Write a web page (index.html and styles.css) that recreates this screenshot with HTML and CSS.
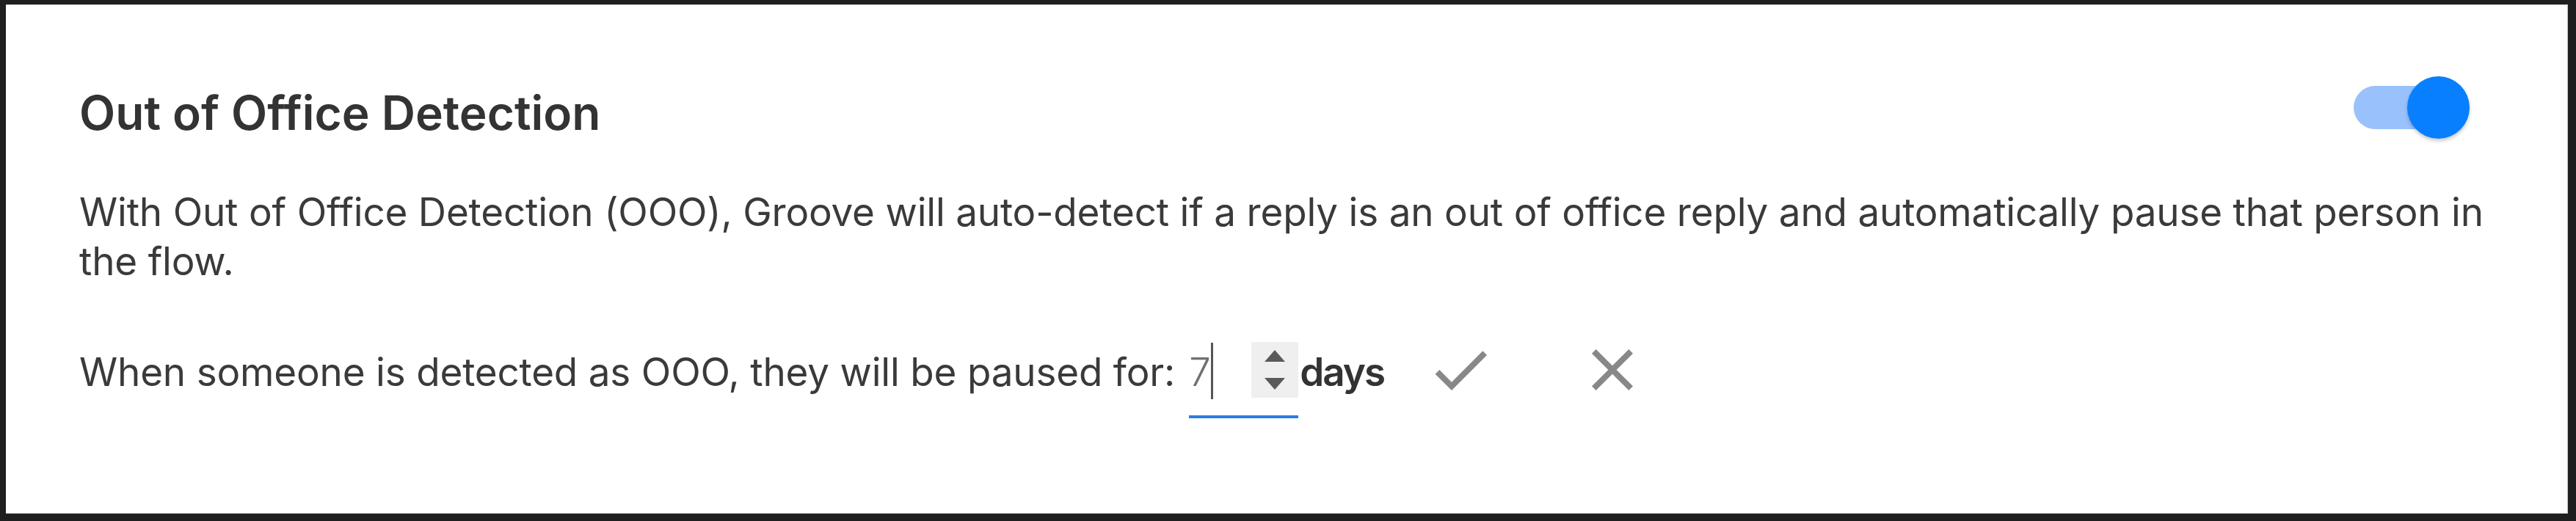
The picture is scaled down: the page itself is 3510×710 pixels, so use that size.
FILE: index.html
```html
<!DOCTYPE html>
<html lang="en">
<head>
<meta charset="utf-8">
<title>Out of Office Detection</title>
<link rel="stylesheet" href="styles.css">
</head>
<body>
<section class="card">
  <div class="card-head">
    <h2 class="title">Out of Office Detection</h2>
    <div class="toggle" role="switch" aria-checked="true">
      <span class="toggle-track"></span>
      <span class="toggle-knob"></span>
    </div>
  </div>
  <p class="desc">With Out of Office Detection (OOO), Groove will auto-detect if a reply is an out of office reply and automatically pause that person in the flow.</p>
  <div class="pause-row">
    <span class="label">When someone is detected as OOO, they will be paused for:</span>
    <div class="num-input">
      <span class="num-value">7</span>
      <span class="caret"></span>
      <span class="spinner">
        <svg class="spin-arrow" viewBox="0 0 28 16"><path d="M14 0 L28 16 L0 16 Z"/></svg>
        <svg class="spin-arrow" viewBox="0 0 28 16"><path d="M0 0 L28 0 L14 16 Z"/></svg>
      </span>
    </div>
    <span class="unit">days</span>
    <button class="icon-btn confirm" aria-label="Save">
      <svg viewBox="0 0 24 24"><path d="M9 16.17L4.83 12l-1.42 1.41L9 19 21 7l-1.41-1.41z"/></svg>
    </button>
    <button class="icon-btn cancel" aria-label="Cancel">
      <svg viewBox="0 0 24 24"><path d="M19 6.41L17.59 5 12 10.59 6.41 5 5 6.41 10.59 12 5 17.59 6.41 19 12 13.41 17.59 19 19 17.59 13.41 12z"/></svg>
    </button>
  </div>
</section>
</body>
</html>
```
FILE: styles.css
```css
html, body {
  margin: 0;
  padding: 0;
  background: #1f1f1f;
}

body {
  font-family: Inter, "Noto Sans", "Liberation Sans", sans-serif;
  color: #3a3a3a;
  overflow: hidden;
}

.card {
  box-sizing: border-box;
  margin: 6px 11px 10px 8px;
  height: 694px;
  background: #ffffff;
  border: 1px solid #c6c6c6;
  border-left: none;
  padding: 110px 98px 0 100px;
}

.card-head {
  display: flex;
  justify-content: space-between;
  align-items: flex-start;
  padding-right: 35px;
}

.title {
  margin: 0;
  font-size: 64px;
  line-height: 74px;
  font-weight: 600;
  color: #333333;
}

.toggle {
  position: relative;
  width: 158px;
  height: 85px;
  margin-top: -13px;
}

.toggle-track {
  position: absolute;
  left: 0;
  top: 13px;
  width: 143px;
  height: 59px;
  border-radius: 30px;
  background: #99c2fc;
}

.toggle-knob {
  position: absolute;
  right: 0;
  top: 0;
  width: 85px;
  height: 85px;
  border-radius: 50%;
  background: #087ffe;
  box-shadow: 0 3px 5px rgba(0, 0, 0, 0.22);
}

.desc {
  margin: 65px 0 0;
  font-size: 53px;
  line-height: 67px;
  letter-spacing: -0.2px;
  color: #3a3a3a;
}

.pause-row {
  display: flex;
  align-items: flex-start;
  margin-top: 66px;
}

.label {
  font-size: 53px;
  line-height: 60px;
  letter-spacing: -0.2px;
  margin-top: 21px;
}

.num-input {
  box-sizing: border-box;
  display: flex;
  align-items: flex-start;
  width: 149px;
  height: 104px;
  margin: 10px 0 0 19px;
  border-bottom: 4px solid #2a7de6;
}

.num-value {
  font-size: 53px;
  line-height: 60px;
  font-weight: 300;
  color: #707070;
  margin-top: 11px;
}

.caret {
  width: 3px;
  height: 77px;
  margin: 1px 0 0 0;
  background: #555555;
}

.spinner {
  display: flex;
  flex-direction: column;
  align-items: center;
  justify-content: space-between;
  box-sizing: border-box;
  width: 64px;
  height: 76px;
  margin-left: auto;
  padding: 11px 0 11px;
  background: #efefef;
}

.spin-arrow {
  width: 28px;
  height: 16px;
  fill: #5a5a5a;
}

.unit {
  font-size: 53px;
  line-height: 60px;
  font-weight: 600;
  letter-spacing: -2px;
  color: #333333;
  margin: 21px 0 0 2px;
}

.icon-btn {
  display: flex;
  width: 96px;
  height: 96px;
  padding: 0;
  border: none;
  background: transparent;
}

.icon-btn svg {
  width: 96px;
  height: 96px;
  fill: #888888;
}

.confirm {
  margin-left: 56px;
}

.cancel {
  margin-left: 111px;
}
```
